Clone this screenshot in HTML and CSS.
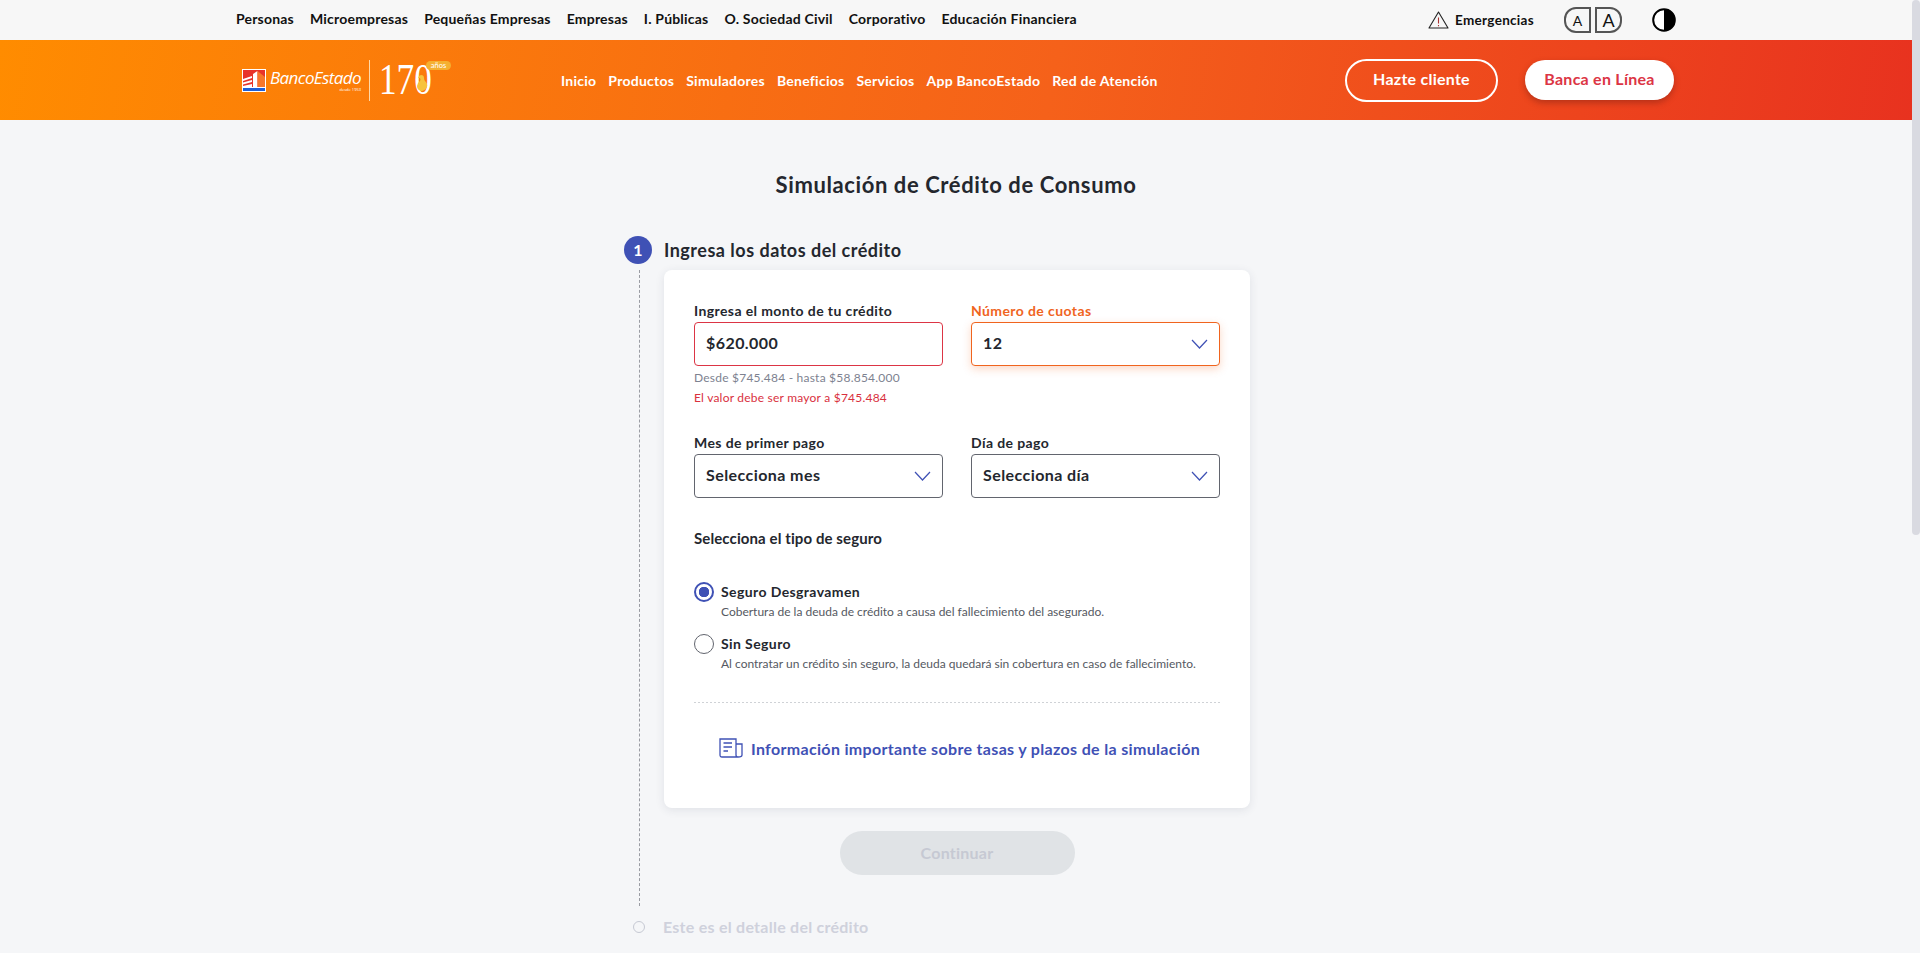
FILE: index.html
```html
<!DOCTYPE html>
<html lang="es">
<head>
    <meta charset="UTF-8">
    <title>Simulación de Crédito de Consumo</title>
    <link rel="stylesheet" href="styles.css">
</head>
<body>

    <div class="topbar">
        <div class="wrap topbar-inner">
            <nav class="segments">
                <a>Personas</a>
                <a>Microempresas</a>
                <a>Pequeñas Empresas</a>
                <a>Empresas</a>
                <a>I. Públicas</a>
                <a>O. Sociedad Civil</a>
                <a>Corporativo</a>
                <a>Educación Financiera</a>
            </nav>
            <div class="tools">
                <a class="emergency">
                    <svg width="21" height="18" viewBox="0 0 21 18" fill="none" stroke="#222" stroke-width="1.1">
                        <path d="M10.5 1 L20 17 H1 Z" stroke-linejoin="round"/>
                        <path d="M10.5 6.5 V12.5 M10.5 14 V15.2" stroke="#a33"/>
                    </svg>
                    Emergencias
                </a>
                <div class="font-size">
                    <span class="font-btn font-small">A</span>
                    <span class="font-btn font-big">A</span>
                </div>
                <svg class="contrast" width="24" height="24" viewBox="0 0 24 24">
                    <circle cx="12" cy="12" r="10.8" fill="#fff" stroke="#000" stroke-width="2"/>
                    <path d="M12 1 A11 11 0 0 1 12 23 Z" fill="#000"/>
                </svg>
            </div>
        </div>
    </div>

    <header class="header">
        <div class="wrap header-inner">
            <div class="logo">
                <svg width="24" height="23" viewBox="0 0 24 23">
                    <rect width="24" height="23" fill="#fff"/>
                    <rect x="1" y="1" width="22" height="17" fill="#e8342a"/>
                    <rect x="1" y="19" width="22" height="3" fill="#1f5fd6"/>
                    <path d="M1 10 L10 7 V9 L1 12 Z M1 13.500 L10 11 V13 L1 15.500 Z M1 17 L10 15 V18 H1 Z M11 18 V5 L15.500 2 V18 Z" fill="#fff"/>
                    <path d="M15.500 2 L23 8 V18 H15.500 Z" fill="#f7772a"/>
                </svg>
                <span class="logo-name">BancoEstado<small>desde 1953</small></span>
                <span class="logo-line"></span>
                <span class="logo-years">
                    <span class="years-num">170</span>
                    <svg class="years-duck" width="12" height="16" viewBox="0 0 12 16">
                        <path d="M5 0 Q8 0 8 3 Q8 5 9 6 Q12 9 11 12 Q9 16 5 16 Q1 15 1 11 Q1 8 4 6 Q5 5 4 3 L2 3 Q3 0 5 0 Z" fill="#f7c33c"/>
                    </svg>
                    <em>años</em>
                </span>
            </div>
            <nav class="mainnav">
                <a>Inicio</a>
                <a>Productos</a>
                <a>Simuladores</a>
                <a>Beneficios</a>
                <a>Servicios</a>
                <a>App BancoEstado</a>
                <a>Red de Atención</a>
            </nav>
            <div class="actions">
                <a class="btn-outline">Hazte cliente</a>
                <a class="btn-white">Banca en Línea</a>
            </div>
        </div>
    </header>

    <main class="page">
        <h1 class="title">Simulación de Crédito de Consumo</h1>

        <div class="steps">
            <div class="step-head">
                <span class="step-num">1</span>
                <h2>Ingresa los datos del crédito</h2>
            </div>

            <div class="step-body">
                <section class="card">
                    <div class="row">
                        <div class="field">
                            <label>Ingresa el monto de tu crédito</label>
                            <div class="control control-error"><span>$620.000</span></div>
                            <p class="hint">Desde $745.484 - hasta $58.854.000</p>
                            <p class="error">El valor debe ser mayor a $745.484</p>
                        </div>
                        <div class="field field-active">
                            <label>Número de cuotas</label>
                            <div class="control control-active"><span>12</span>
                                <svg class="chevron" width="17" height="10" viewBox="0 0 17 10"><path d="M1 1 L8.500 9 L16 1"/></svg>
                            </div>
                        </div>
                    </div>

                    <div class="row row-second">
                        <div class="field">
                            <label>Mes de primer pago</label>
                            <div class="control"><span>Selecciona mes</span>
                                <svg class="chevron" width="17" height="10" viewBox="0 0 17 10"><path d="M1 1 L8.500 9 L16 1"/></svg>
                            </div>
                        </div>
                        <div class="field">
                            <label>Día de pago</label>
                            <div class="control"><span>Selecciona día</span>
                                <svg class="chevron" width="17" height="10" viewBox="0 0 17 10"><path d="M1 1 L8.500 9 L16 1"/></svg>
                            </div>
                        </div>
                    </div>

                    <h3 class="insurance-title">Selecciona el tipo de seguro</h3>

                    <div class="radio">
                        <span class="radio-dot radio-on"></span>
                        <div>
                            <strong>Seguro Desgravamen</strong>
                            <p>Cobertura de la deuda de crédito a causa del fallecimiento del asegurado.</p>
                        </div>
                    </div>
                    <div class="radio">
                        <span class="radio-dot"></span>
                        <div>
                            <strong>Sin Seguro</strong>
                            <p>Al contratar un crédito sin seguro, la deuda quedará sin cobertura en caso de fallecimiento.</p>
                        </div>
                    </div>

                    <div class="divider"></div>

                    <a class="info-link">
                        <svg width="24" height="20" viewBox="0 0 24 20" fill="none" stroke="#3f51b5" stroke-width="1.300">
                            <path d="M18 19 H3 Q1 19 1 17 V1 H17 V17 Q17 19 19 19 Q23 19 23 17 V6 H17"/>
                            <path d="M4.500 5 H13 M4.500 9 H13 M4.500 13 H9"/>
                        </svg>
                        Información importante sobre tasas y plazos de la simulación
                    </a>
                </section>

                <div class="continue">
                    <button class="btn-disabled">Continuar</button>
                </div>
            </div>

            <div class="step-next">
                <span class="step-ring"></span>
                <h2>Este es el detalle del crédito</h2>
            </div>
        </div>
    </main>

    <div class="scroll-thumb"></div>

</body>
</html>
```

FILE: styles.css
```css
* {
    box-sizing: border-box;
}
html {
    overflow: hidden;
}
body {
    margin: 0;
    height: 100vh;
    overflow: hidden;
    padding-right: 8px;
    background-color: #f5f6f8;
    color: #24272e;
    font-family: "Lato", "Noto Sans", sans-serif;
}
h1, h2, h3, p {
    margin: 0;
}
.wrap {
    width: 1440px;
    margin: 0 auto;
}
.scroll-thumb {
    position: fixed;
    top: 0;
    right: 0;
    width: 8px;
    height: 535px;
    border-radius: 4px;
    background-color: #d9dae1;
}

/* barra superior */
.topbar {
    height: 40px;
    background-color: #f7f7f7;
}
.topbar-inner {
    display: flex;
    align-items: center;
    justify-content: space-between;
    height: 40px;
}
.segments {
    display: flex;
    gap: 16px;
    margin-top: -4px;
    font-size: 14px;
    font-weight: 700;
    letter-spacing: .2px;
    color: #111;
}
.tools {
    display: flex;
    align-items: center;
}
.emergency {
    display: flex;
    align-items: center;
    gap: 6px;
    font-size: 13.500px;
    font-weight: 700;
    letter-spacing: .3px;
    color: #111;
}
.font-size {
    display: flex;
    gap: 4px;
    margin-left: 30px;
}
.font-btn {
    width: 27px;
    height: 26px;
    border: 2px solid #555;
    display: flex;
    align-items: center;
    justify-content: center;
    color: #111;
}
.font-small {
    border-radius: 12px 0 0 12px;
    font-size: 14px;
}
.font-big {
    border-radius: 0 12px 12px 0;
    font-size: 18px;
}
.contrast {
    margin-left: 30px;
}

/* cabecera */
.header {
    height: 80px;
    background: linear-gradient(100deg, #ff8c00 0%, #f5611a 55%, #e8321f 100%);
}
.header-inner {
    display: flex;
    align-items: center;
    height: 80px;
}
.logo {
    display: flex;
    align-items: center;
    width: 325px;
    padding-left: 6px;
    color: #fff;
}
.logo-name {
    display: flex;
    flex-direction: column;
    align-items: flex-end;
    width: 92px;
    margin-left: 3px;
    font-family: "Open Sans", sans-serif;
    font-size: 17px;
    font-style: italic;
    letter-spacing: -0.600px;
    line-height: 17px;
    white-space: nowrap;
}
.logo-name small {
    margin-top: 2px;
    font-size: 4px;
    line-height: 4px;
    font-style: normal;
    letter-spacing: 0;
}
.logo-line {
    width: 1px;
    height: 41px;
    margin: 0 9px 0 8px;
    background-color: #ffd9a8;
}
.logo-years {
    position: relative;
    display: block;
    width: 74px;
    height: 44px;
}
.years-num {
    display: block;
    font-family: "Liberation Serif", serif;
    font-size: 44px;
    line-height: 44px;
    transform: scaleX(.8);
    transform-origin: left center;
}
.years-duck {
    position: absolute;
    left: 37px;
    top: 17px;
}
.logo-years em {
    position: absolute;
    left: 47px;
    top: 3px;
    height: 9px;
    width: 25px;
    border-radius: 5px;
    background-color: #f5b030;
    font-family: "Lato", sans-serif;
    font-size: 7.500px;
    font-style: normal;
    line-height: 9px;
    text-align: center;
}
.mainnav {
    display: flex;
    gap: 12px;
    font-size: 14px;
    font-weight: 700;
    letter-spacing: .25px;
    color: #fff;
}
.actions {
    display: flex;
    align-items: center;
    gap: 27px;
    margin-left: auto;
    margin-right: 2px;
}
.btn-outline {
    width: 153px;
    height: 43px;
    border: 2px solid #fff;
    border-radius: 22px;
    color: #fff;
    font-size: 16px;
    font-weight: 700;
    letter-spacing: .25px;
    line-height: 35px;
    text-align: center;
}
.btn-white {
    width: 149px;
    height: 40px;
    border-radius: 20px;
    background-color: #fff;
    color: #dc3545;
    font-size: 16px;
    font-weight: 700;
    letter-spacing: .25px;
    line-height: 37px;
    text-align: center;
    box-shadow: 0 3px 6px rgba(120, 30, 20, .45);
}

/* contenido */
.title {
    padding-top: 50px;
    font-size: 22px;
    font-weight: 700;
    letter-spacing: .6px;
    line-height: 30px;
    text-align: center;
}
.steps {
    width: 588px;
    margin: 0 auto;
    padding: 36px 0 0 2px;
}
.step-head {
    display: flex;
    align-items: center;
    gap: 12px;
    height: 28px;
    margin-left: -40px;
}
.step-num {
    width: 28px;
    height: 28px;
    border-radius: 50%;
    background-color: #3f51b5;
    color: #fff;
    font-size: 16px;
    font-weight: 700;
    line-height: 28px;
    text-align: center;
}
.step-head h2 {
    font-size: 18px;
    font-weight: 700;
    letter-spacing: .5px;
}
.step-body {
    margin: 15px 0 0 -25px;
    padding-left: 24px;
    border-left: 1px dashed #9a9ca3;
}
.card {
    height: 538px;
    margin-top: -9px;
    padding: 30px;
    border-radius: 8px;
    background-color: #fff;
    box-shadow: 0 2px 10px rgba(40, 50, 80, .1);
}
.row {
    display: flex;
    gap: 28px;
}
.row-second {
    margin-top: 24px;
}
.field {
    width: 249px;
}
.field label {
    display: block;
    height: 22px;
    font-size: 14px;
    font-weight: 700;
    letter-spacing: .4px;
    line-height: 22px;
}
.field-active label {
    color: #f0641e;
}
.control {
    display: flex;
    align-items: center;
    justify-content: space-between;
    height: 44px;
    padding: 0 11px;
    border: 1px solid #62656e;
    border-radius: 4px;
    font-size: 16px;
    font-weight: 700;
    letter-spacing: .43px;
    background-color: #fff;
}
.control span {
    margin-top: -3px;
}
.control-error {
    border-color: #dc3545;
}
.control-active {
    border-color: #f0641e;
    box-shadow: 0 3px 8px rgba(240, 100, 30, .25);
}
.chevron {
    fill: none;
    stroke: #3f51b5;
    stroke-width: 1.200;
}
.hint, .error {
    font-size: 12px;
    letter-spacing: .22px;
    line-height: 20px;
}
.hint {
    margin-top: 2px;
    color: #7d8290;
}
.error {
    color: #d9303e;
}
.insurance-title {
    margin-top: 30px;
    font-size: 15px;
    font-weight: 700;
    letter-spacing: .1px;
    line-height: 20px;
}
.radio {
    display: flex;
    gap: 7px;
    height: 52px;
}
.insurance-title + .radio {
    margin-top: 34px;
}
.radio-dot {
    flex: none;
    width: 20px;
    height: 20px;
    border: 1px solid #62656e;
    border-radius: 50%;
}
.radio-on {
    border: 2px solid #3f51b5;
    background: radial-gradient(circle, #3f51b5 0, #3f51b5 5px, #fff 5.500px);
}
.radio strong {
    display: block;
    font-size: 14px;
    font-weight: 700;
    letter-spacing: .4px;
    line-height: 20px;
}
.radio p {
    font-size: 12px;
    line-height: 20px;
    color: #555962;
}
.divider {
    height: 1px;
    margin-top: 16px;
    background: repeating-linear-gradient(90deg, #cfd2d6 0, #cfd2d6 2px, transparent 2px, transparent 4px);
}
.info-link {
    display: flex;
    align-items: center;
    justify-content: center;
    gap: 8px;
    margin-top: 35px;
    padding-left: 5px;
    color: #3f51b5;
    font-size: 16px;
    font-weight: 700;
    letter-spacing: .33px;
}
.continue {
    display: flex;
    justify-content: center;
    padding: 23px 0 31px;
}
.btn-disabled {
    width: 235px;
    height: 44px;
    padding-bottom: 3px;
    border: none;
    border-radius: 22px;
    background-color: #e0e3e6;
    color: #c6c9d3;
    font-family: inherit;
    font-size: 16px;
    font-weight: 700;
    letter-spacing: .25px;
}
.step-next {
    display: flex;
    align-items: center;
    gap: 18px;
    height: 24px;
    margin: 9px 0 0 -31px;
}
.step-ring {
    width: 12px;
    height: 12px;
    border: 1px solid #c6c9d3;
    border-radius: 50%;
}
.step-next h2 {
    margin-top: -2px;
    font-size: 16px;
    font-weight: 700;
    letter-spacing: .25px;
    color: #cfd1dc;
}
```
